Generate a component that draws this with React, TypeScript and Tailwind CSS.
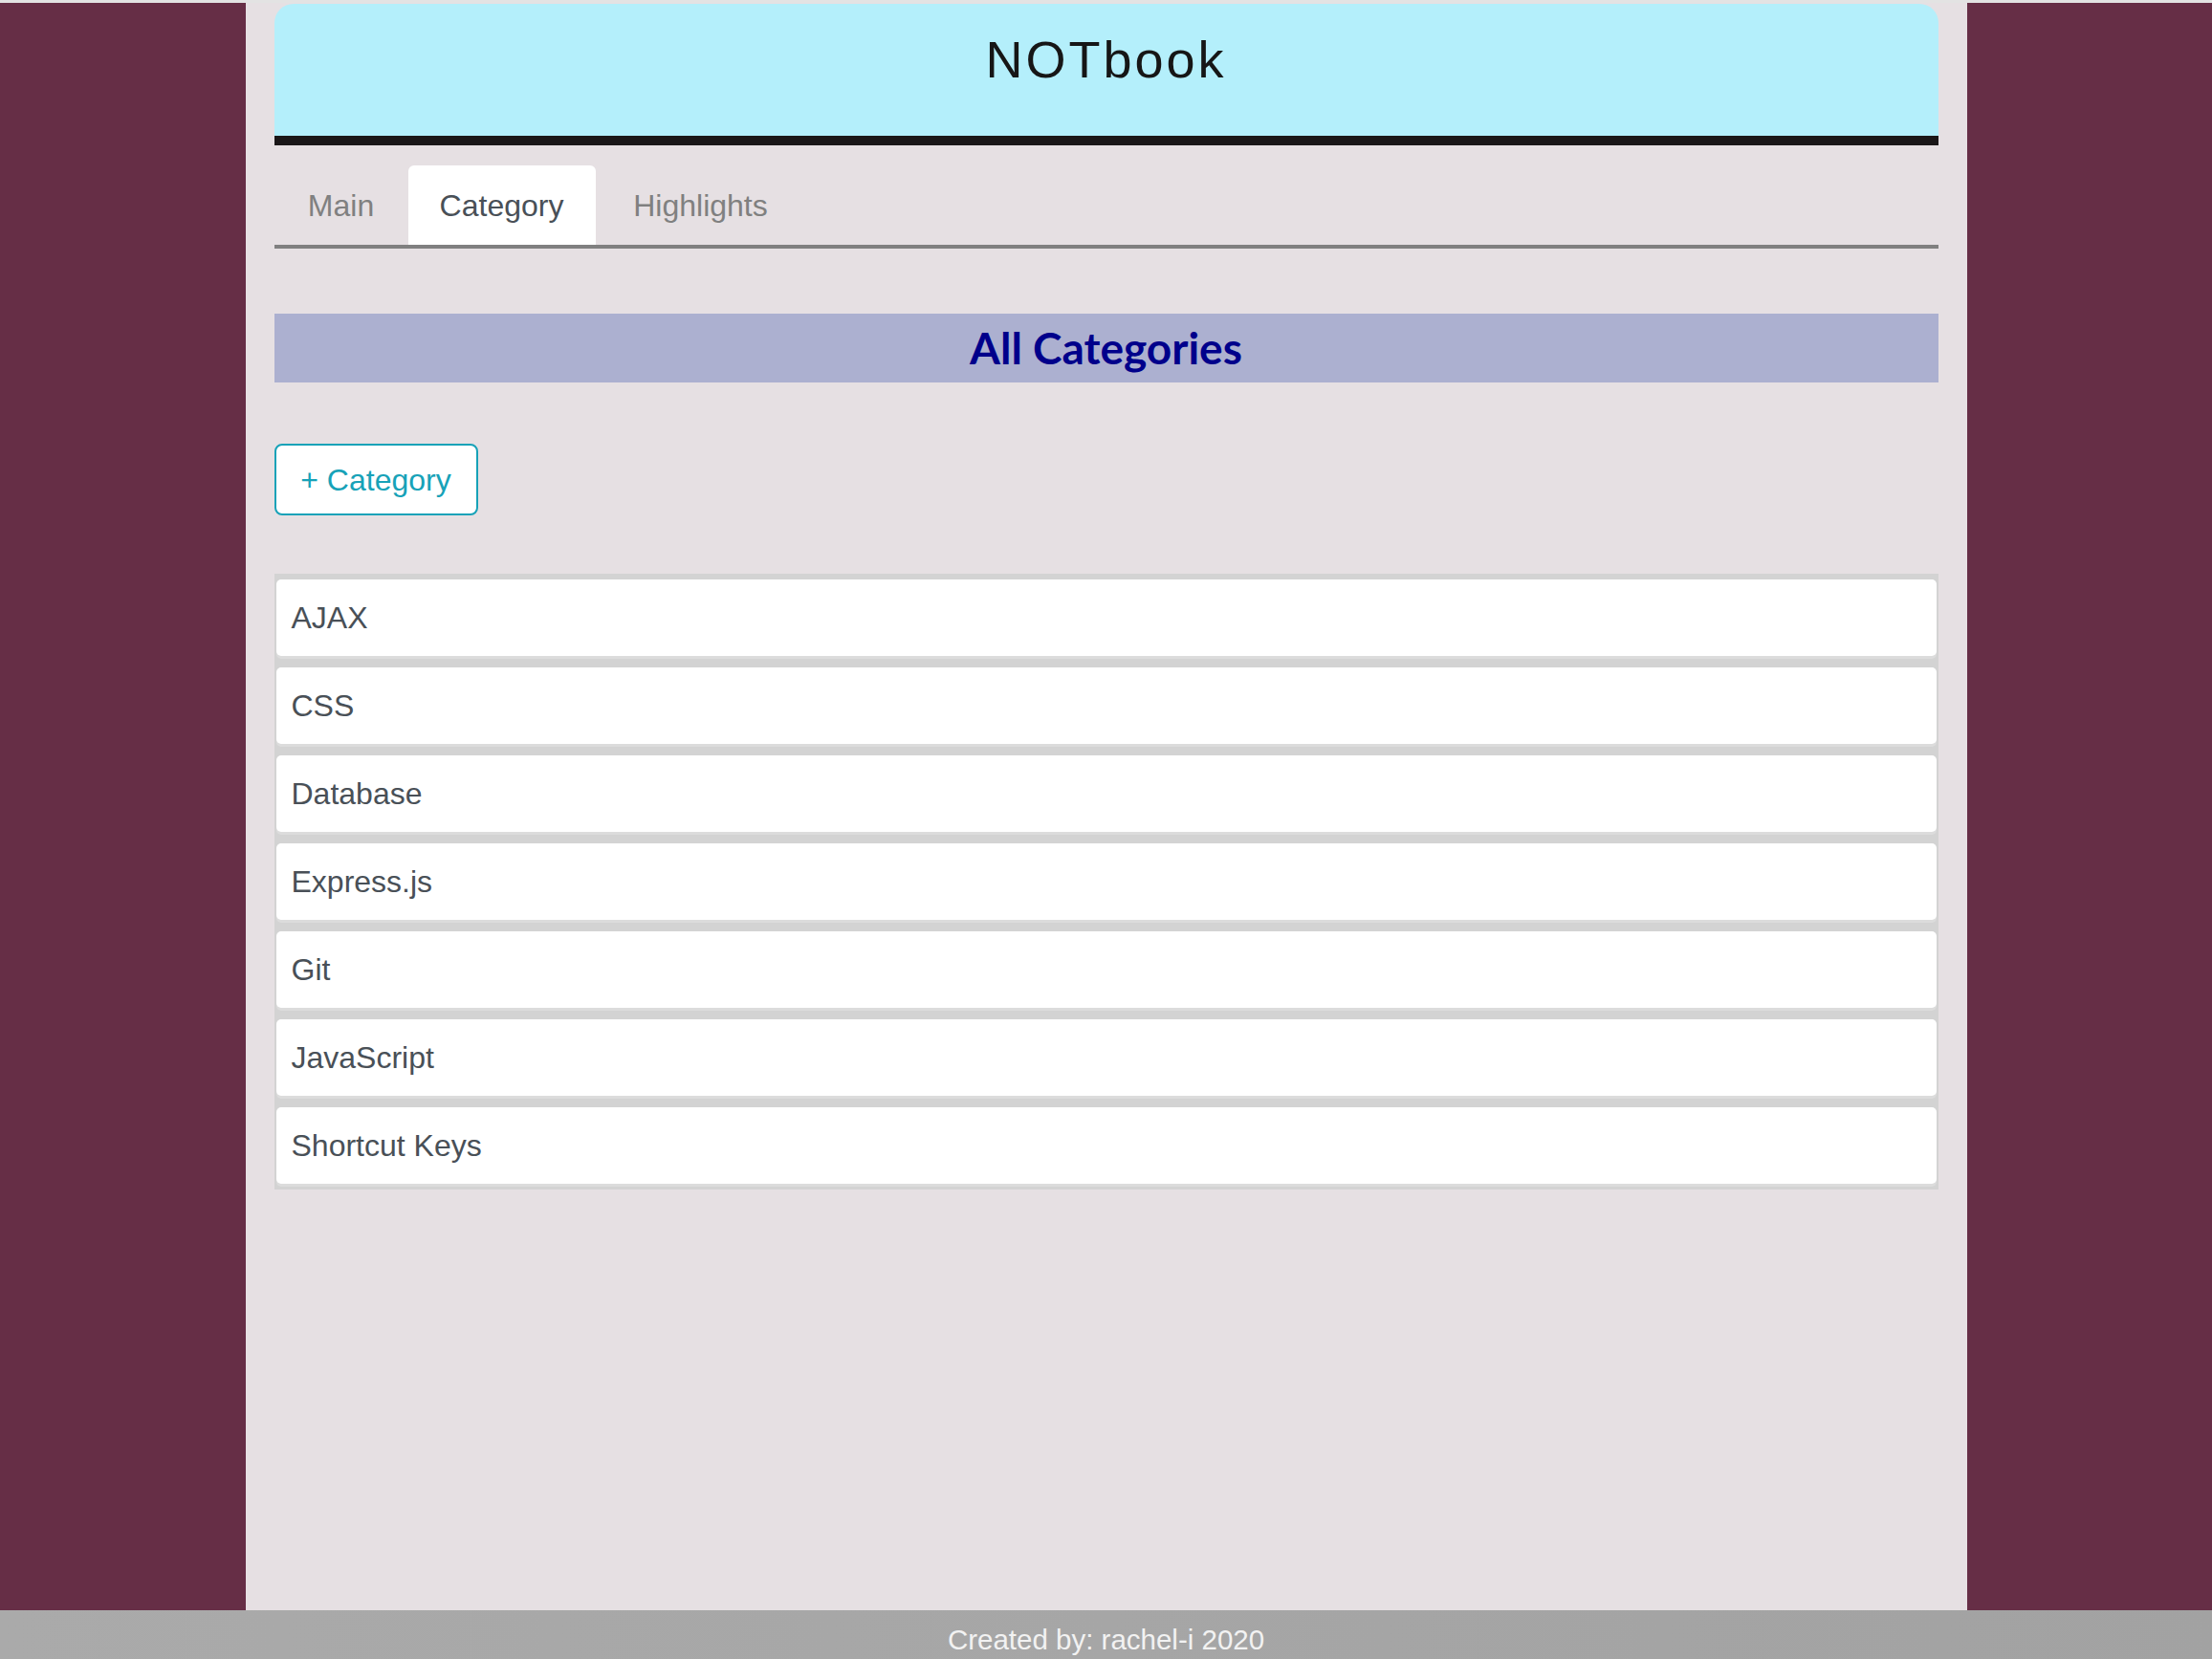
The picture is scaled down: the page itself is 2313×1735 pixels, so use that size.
import React from "react";

const categories = [
    "AJAX",
    "CSS",
    "Database",
    "Express.js",
    "Git",
    "JavaScript",
    "Shortcut Keys",
];

const tabs = [
    { label: "Main", width: "w-[140px]", active: false },
    { label: "Category", width: "w-[196px]", active: true },
    { label: "Highlights", width: "w-[220px]", active: false },
];

const App: React.FC = () => {
    return (
        <div className="h-[1735px] overflow-hidden flex flex-col bg-[#662e46] font-['Liberation_Sans',Arial,sans-serif]">
            <div className="h-[3px] shrink-0 bg-[#e3e3e3]" />

            <div className="flex-1 flex justify-center min-h-0">
                <main className="w-[1800px] bg-[#e6e0e3] px-[30px] pt-[1px]">
                    {/* header */}
                    <header className="h-[148px] bg-[#b4effb] rounded-t-[20px] border-b-[10px] border-[#1a1718] flex justify-center pt-[31px]">
                        <h1 className="text-[54px] leading-none tracking-[3px] text-[#161616] font-['Liberation_Sans',sans-serif]">
                            NOTbook
                        </h1>
                    </header>

                    {/* tabs */}
                    <nav className="mt-[21px] flex border-b-[4px] border-[#808080]">
                        {tabs.map((t) => (
                            <div
                                key={t.label}
                                className={
                                    t.active
                                        ? `${t.width} h-[83px] flex items-center justify-center text-[32px] bg-white rounded-t-[6px] text-[#495057]`
                                        : `${t.width} h-[83px] flex items-center justify-center text-[32px] text-[#808080]`
                                }
                            >
                                {t.label}
                            </div>
                        ))}
                    </nav>

                    {/* title bar */}
                    <div className="mt-[68px] h-[72px] bg-[#acb0d0] flex items-center justify-center">
                        <h4 className="text-[46px] leading-none font-bold text-[#00008b] font-['Lato',sans-serif]">
                            All Categories
                        </h4>
                    </div>

                    <button className="mt-[64px] h-[75px] w-[213px] flex items-center justify-center bg-white border-2 border-[#17a2b8] rounded-[8px] text-[32px] text-[#17a2b8]">
                        + Category
                    </button>

                    {/* list */}
                    <ul className="mt-[61px] bg-[#d3d3d3] px-[2px] py-[6px] flex flex-col gap-[12px]">
                        {categories.map((c) => (
                            <li
                                key={c}
                                className="h-[80px] bg-white rounded-[5px] flex items-center px-[16px] text-[32px] text-[#495057] shadow-[0_3px_0_#dcdcdc]"
                            >
                                {c}
                            </li>
                        ))}
                    </ul>
                </main>
            </div>

            <footer className="h-[51px] shrink-0 bg-gradient-to-r from-[#aaaaaa] to-[#a2a2a2] flex justify-center pt-[7px]">
                <p className="text-[29.5px] leading-[48px] text-[#f2f2f2]">
                    Created by: rachel-i 2020
                </p>
            </footer>
        </div>
    );
};

export default App;
